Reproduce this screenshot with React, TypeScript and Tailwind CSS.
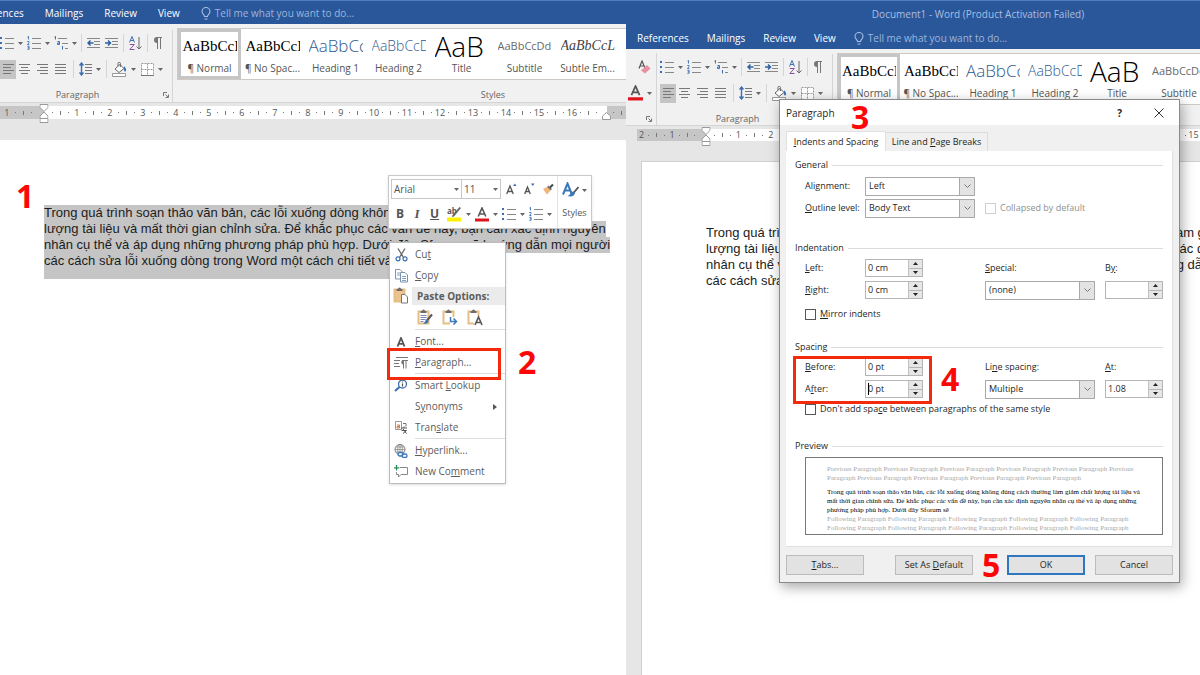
import { useId, type ReactNode } from 'react';

const RULER_COUNT = 18;

const STYLES = [
  { name: '¶ Normal', sample: 'AaBbCcI', look: "font-['Liberation_Serif',serif] text-[15px] text-black" },
  { name: '¶ No Spac...', sample: 'AaBbCcI', look: "font-['Liberation_Serif',serif] text-[15px] text-black" },
  { name: 'Heading 1', sample: 'AaBbCc', look: 'font-light text-[17px] text-[#2f5a8f]' },
  { name: 'Heading 2', sample: 'AaBbCcD', look: 'font-light text-[14px] text-[#2f5a8f]' },
  { name: 'Title', sample: 'AaB', look: 'font-light text-[28px] text-black' },
  { name: 'Subtitle', sample: 'AaBbCcDd', look: 'text-[11px] text-[#6a6a6a]' },
  { name: 'Subtle Em...', sample: 'AaBbCcL', look: "font-['Liberation_Serif',serif] italic text-[14px] text-[#444]" },
];

const TEXT_LINES = [
  'Trong quá trình soạn thảo văn bản, các lỗi xuống dòng không đúng cách thường làm giảm chất',
  'lượng tài liệu và mất thời gian chỉnh sửa. Để khắc phục các vấn đề này, bạn cần xác định nguyên',
  'nhân cụ thể và áp dụng những phương pháp phù hợp. Dưới đây Sforum sẽ hướng dẫn mọi người',
  'các cách sửa lỗi xuống dòng trong Word một cách chi tiết và',
];

/* ---------- Icons ---------- */

function Caret() {
  return (
    <svg className="w-[5px] h-[3px] shrink-0" viewBox="0 0 5 3">
      <path d="M0 0h5L2.500 3z" fill="#666" />
    </svg>
  );
}

function Bullets() {
  return (
    <svg className="w-[14px] h-[14px] shrink-0" viewBox="0 0 14 14">
      <path d="M0 1h2v2H0zM0 6h2v2H0zM0 11h2v2H0z" fill="#3c6eb4" />
      <path d="M5 2.500h9M5 7.500h9M5 12.500h9" stroke="#888" />
    </svg>
  );
}

function Numbering() {
  return (
    <svg className="w-[14px] h-[14px] shrink-0" viewBox="0 0 14 14">
      <path d="M.5 1l1-.7v3.200M.3 5.500h1.700v1.200L.5 8.500h1.800M.3 10.300h1.800v3H.3M.8 11.800h1.300" stroke="#3c6eb4" strokeWidth=".9" fill="none" />
      <path d="M5 2.500h9M5 7.500h9M5 12.500h9" stroke="#888" />
    </svg>
  );
}

function Multilevel() {
  return (
    <svg className="w-[14px] h-[14px] shrink-0" viewBox="0 0 14 14">
      <path d="M.5 1l1-.7v3.200M3.500 5.500h2v3h-2v-1.500h2M8.500 10v3.500" stroke="#3c6eb4" fill="none" />
      <path d="M4 2.500h9M8 7.500h6M11 12.500h3" stroke="#888" />
    </svg>
  );
}

function IndentIcon({ out }: { out?: boolean }) {
  return (
    <svg className="w-[13px] h-[13px] shrink-0" viewBox="0 0 13 13">
      <path d="M0 1.500h13M7 4.500h6M7 7.500h6M0 10.500h13" stroke="#888" />
      {out ? (
        <path d="M6.500 6H1M3.500 3.500L1 6L3.500 8.500" stroke="#2f5f9f" strokeWidth="1.500" fill="none" />
      ) : (
        <path d="M0 6h5.500M3 3.500l2.500 2.500L3 8.500" stroke="#2f5f9f" strokeWidth="1.500" fill="none" />
      )}
    </svg>
  );
}

function SortIcon() {
  return (
    <svg className="w-[13px] h-[15px] shrink-0" viewBox="0 0 13 15">
      <path d="M.5 6.500L3 .5l2.500 6M1.300 4.500h3.400" stroke="#3c6eb4" fill="none" />
      <path d="M.8 8.500h4.500L.8 13.500h4.700" stroke="#8a4fa0" fill="none" />
      <path d="M10 1v12M7.500 10.500L10 13l2.500-2.500" stroke="#666" fill="none" />
    </svg>
  );
}

function Pilcrow() {
  return (
    <svg className="w-[9px] h-[12px] shrink-0" viewBox="0 0 9 12">
      <path d="M3 .5H9M4.500 .5V12M7.500 .5V12" stroke="#777" />
      <path d="M4 0a3 3 0 0 0 0 6z" fill="#777" />
    </svg>
  );
}

function AlignIcon({ kind }: { kind: 'left' | 'center' | 'right' | 'justify' }) {
  const paths = {
    left: 'M0 1.500h11M0 4.500h8M0 7.500h11M0 10.500h8',
    center: 'M0 1.500h11M2 4.500h7M0 7.500h11M2 10.500h7',
    right: 'M0 1.500h11M3 4.500h8M0 7.500h11M3 10.500h8',
    justify: 'M0 1.500h11M0 4.500h11M0 7.500h11M0 10.500h11',
  };
  return (
    <svg className="w-[11px] h-[12px] shrink-0" viewBox="0 0 11 12">
      <path d={paths[kind]} stroke="#787878" />
    </svg>
  );
}

function LineSpacing() {
  return (
    <svg className="w-[13px] h-[14px] shrink-0" viewBox="0 0 13 14">
      <path d="M2.500 1v12M.5 3.500l2-2.500l2 2.500M.5 10.500l2 2.500l2-2.500" stroke="#3c6eb4" strokeWidth="1.400" fill="none" />
      <path d="M6 2.500h7M6 5.500h7M6 8.500h7M6 11.500h7" stroke="#777" />
    </svg>
  );
}

function Bucket() {
  return (
    <svg className="w-[15px] h-[15px] shrink-0" viewBox="0 0 15 15">
      <path d="M3 7l5-4.500l4 4L7 10.500zM6 4V1.500a1.200 1.200 0 0 1 2.400 0V5" stroke="#666" fill="#fff" />
      <path d="M12.500 4.500c1.700 2 2.200 3.500 1 5c-1.200 .3-1.800-.7-1.500-5z" fill="#3c6eb4" />
      <path d="M.5 11.500h13v3H.5z" fill="#fff" stroke="#999" />
    </svg>
  );
}

function Borders() {
  return (
    <svg className="w-[13px] h-[13px] shrink-0" viewBox="0 0 13 13">
      <path d="M.5 .5h12v12H.5zM6.500 .5v12M.5 6.500h12" stroke="#999" fill="#fff" strokeDasharray="2 1" />
      <path d="M0 12.500h13" stroke="#777" />
    </svg>
  );
}

function ClearFormat() {
  return (
    <svg className="w-[13px] h-[14px] shrink-0" viewBox="0 0 13 14">
      <path d="M1 8.500L4 1l3 7M2 6h4" stroke="#555" strokeWidth="1.200" fill="none" />
      <path d="M3 10.500L9 5l3.500 3.500L7 13.500z" fill="#e7909f" />
    </svg>
  );
}

function FontColor({ big }: { big?: boolean }) {
  return (
    <svg className={big ? 'w-[15px] h-[16px] shrink-0' : 'w-[14px] h-[15px] shrink-0'} viewBox="0 0 14 15">
      <path d="M3.200 9.500L7 1l3.800 8.500M4.600 7h4.800" stroke="#555" strokeWidth="1.600" fill="none" />
      <path d="M0 11.500h14v3H0z" fill="#e0121d" />
    </svg>
  );
}

function Launcher() {
  return (
    <svg className="w-[6px] h-[6px] shrink-0" viewBox="0 0 6 6">
      <path d="M.5 4V.5H4M2.500 2.500L5 5M5.500 2.500v3h-3" stroke="#777" fill="none" />
    </svg>
  );
}

function Bulb() {
  return (
    <svg className="w-[10px] h-[13px] shrink-0" viewBox="0 0 10 13">
      <path d="M3.500 9.500C3.500 7.500 1 7 1 4.500a4 4 0 0 1 8 0C9 7 6.500 7.500 6.500 9.500zM3.500 12h3" stroke="#a9bfe0" strokeWidth="1.100" fill="none" />
    </svg>
  );
}

function Highlighter() {
  return (
    <svg className="w-[15px] h-[16px] shrink-0" viewBox="0 0 15 16">
      <text x="0" y="8" fontSize="8" fontWeight="bold" fill="#555" fontFamily="Open Sans">ab</text>
      <path d="M14 2L7 10.500l-2 .5l.5-2L12.500 1z" fill="#666" />
      <path d="M0 11.500h14v4H0z" fill="#fff200" />
    </svg>
  );
}

function Brush() {
  return (
    <svg className="w-[12px] h-[12px] shrink-0" viewBox="0 0 12 12">
      <path d="M1 6l4-2l3.500 3.500L5 11.500z" fill="#f2b573" />
      <path d="M5 4l1.500-1.500L10 6L8.500 7.500z" fill="#777" />
      <path d="M8 4.500L11 1.500" stroke="#444" strokeWidth="2" />
    </svg>
  );
}

function StylesIcon() {
  return (
    <svg className="w-[17px] h-[16px] shrink-0" viewBox="0 0 17 16">
      <path d="M1 12.500L5.500 1.500L10 12.500M2.800 8.500h5.500" stroke="#3c78b8" strokeWidth="2" fill="none" />
      <path d="M16.500 5L11 11.500" stroke="#555" strokeWidth="1.800" />
      <path d="M11.500 9.500c-3 0-2.500 3-6 4.500c3 1 7 .5 7.500-3z" fill="#3c78b8" />
    </svg>
  );
}

function CutIcon() {
  return (
    <svg className="w-[13px] h-[14px]" viewBox="0 0 13 14">
      <path d="M3 .5L8.500 9.500M10 .5L4.500 9.500" stroke="#666" strokeWidth="1.300" />
      <circle cx="3" cy="10.800" r="2" stroke="#3c6eb4" strokeWidth="1.200" fill="none" />
      <circle cx="10" cy="10.800" r="2" stroke="#3c6eb4" strokeWidth="1.200" fill="none" />
    </svg>
  );
}

function CopyIcon() {
  return (
    <svg className="w-[13px] h-[14px]" viewBox="0 0 13 14">
      <path d="M.5 .5H5L7.500 3v7h-7z" fill="#fff" stroke="#7d93ad" />
      <path d="M5.500 3.500H10L12.500 6v7h-7z" fill="#fff" stroke="#7d93ad" />
      <path d="M2 4h3M2 6h3M7 7.500h4M7 9.500h4M7 11.500h4" stroke="#7fa3cf" />
    </svg>
  );
}

function PasteIcon({ kind }: { kind?: 'keep' | 'merge' | 'text' }) {
  return (
    <svg className="w-[16px] h-[17px]" viewBox="0 0 16 17">
      <path d="M1.500 2.500h10v12h-10z" fill={kind ? '#fff' : '#ecc48c'} stroke="#e6bd84" strokeWidth="2" />
      <path d="M3.500 4V2h1.500a1.500 1.500 0 0 1 3 0h1.500v2z" fill="#6c6c6c" />
      {kind === 'keep' && (
        <>
          <path d="M3.500 6.500h6M3.500 8.500h6M3.500 10.500h5M3.500 12.500h3" stroke="#7d86b5" />
          <path d="M15 5.500L9.500 12" stroke="#555" strokeWidth="2" />
          <path d="M10 10.500c-2 0-1.500 3-4 4c3 .8 5.500 0 5.500-2.500z" fill="#3c78b8" />
        </>
      )}
      {kind === 'merge' && (
        <>
          <path d="M8 8h7v8H8z" fill="#fff" />
          <path d="M8.500 8v4.500h5.500M11.500 9.500l3 3l-3 3" stroke="#3c78b8" strokeWidth="1.500" fill="none" />
        </>
      )}
      {kind === 'text' && (
        <>
          <path d="M7 7h9v9H7z" fill="#fff" />
          <path d="M8 16l3.500-8l3.500 8M9.300 13.500h4.400" stroke="#555" strokeWidth="1.600" fill="none" />
        </>
      )}
      {!kind && <path d="M8.500 7.500h3.500l2.500 2.500v6h-6z" fill="#fff" stroke="#777" />}
    </svg>
  );
}

function FontLetter() {
  return (
    <svg className="w-[10px] h-[10px]" viewBox="0 0 10 10">
      <path d="M1.500 9.500L5 1l3.500 8.500M2.500 6.800h5" stroke="#555" strokeWidth="1.800" fill="none" />
    </svg>
  );
}

function ParagraphIcon() {
  return (
    <svg className="w-[14px] h-[12px]" viewBox="0 0 14 12">
      <path d="M2 .5h12M0 3.500h6M0 6.500h5M0 9.500h6M8 3.500h6M9.500 3.500v8M12 3.500v8" stroke="#777" />
      <path d="M9.500 3a2.200 2.200 0 0 0 0 4.500z" fill="#777" />
    </svg>
  );
}

function LookupIcon() {
  return (
    <svg className="w-[14px] h-[13px]" viewBox="0 0 14 13">
      <circle cx="8.500" cy="5" r="4" stroke="#3c6eb4" strokeWidth="1.300" fill="#fff" />
      <path d="M5.500 8L1 12" stroke="#3c6eb4" strokeWidth="2" />
      <path d="M8.500 4.500v3M8.500 2.500v1" stroke="#555" strokeWidth="1.200" />
    </svg>
  );
}

function TranslateIcon() {
  return (
    <svg className="w-[13px] h-[13px]" viewBox="0 0 13 13">
      <path d="M.5 .5h6v8h-6z" fill="#fff" stroke="#999" />
      <path d="M2 4h2.500v3H2V5.500h2.500" stroke="#d07a3f" fill="none" />
      <path d="M8 2.500h3v3" stroke="#777" fill="none" />
      <path d="M6 7h6M9 5.500V7M6.500 9.500h5L8 12.500M8 8l3.500 4.500" stroke="#555" fill="none" />
    </svg>
  );
}

function HyperlinkIcon() {
  return (
    <svg className="w-[14px] h-[14px]" viewBox="0 0 14 14">
      <circle cx="6" cy="5.500" r="5" stroke="#777" fill="#fff" />
      <path d="M1 5.500h10M6 .5v10M2 3h8M2 8h8" stroke="#888" strokeWidth=".8" />
      <ellipse cx="6" cy="5.500" rx="2.300" ry="5" stroke="#888" strokeWidth=".8" fill="none" />
      <rect x="4" y="8.500" width="5" height="3.500" rx="1.700" stroke="#3c78b8" strokeWidth="1.300" fill="#fff" />
      <rect x="8" y="10" width="5" height="3.500" rx="1.700" stroke="#3c78b8" strokeWidth="1.300" fill="none" />
    </svg>
  );
}

function CommentIcon() {
  return (
    <svg className="w-[14px] h-[13px]" viewBox="0 0 14 13">
      <path d="M6 2.500h7.500v7H7l-2.500 2.500V9.500h-2V7" stroke="#888" fill="none" />
      <path d="M2.500 0v5.500M0 2.800h5.300" stroke="#2f8f5b" strokeWidth="1.300" />
    </svg>
  );
}

/* ---------- Shared pieces ---------- */

// "&" marks the underlined accelerator letter
function Accel({ text }: { text: string }) {
  const at = text.indexOf('&');
  if (at < 0) return <>{text}</>;
  return (
    <>
      {text.slice(0, at)}
      <u className="underline-offset-1">{text[at + 1]}</u>
      {text.slice(at + 2)}
    </>
  );
}

function Separator() {
  return <span className="w-px h-[18px] bg-[#d5d5d5] shrink-0" />;
}

function IconButton({ label, menu, children }: { label: string; menu?: boolean; children: ReactNode }) {
  return (
    <button type="button" aria-label={label} className="flex items-center gap-[4px] shrink-0">
      {children}
      {menu && <Caret />}
    </button>
  );
}

function ParagraphGroup() {
  return (
    <div className="w-[173px] shrink-0 border-r border-[#d5d5d5]">
      <div className="flex items-center h-[26px]">
        <div className="flex items-center gap-[4px]">
          <IconButton label="Bullets" menu><Bullets /></IconButton>
          <IconButton label="Numbering" menu><Numbering /></IconButton>
          <IconButton label="Multilevel list" menu><Multilevel /></IconButton>
        </div>
        <div className="flex items-center gap-[5px] pl-[4px]">
          <Separator />
          <IconButton label="Decrease indent"><IndentIcon out /></IconButton>
          <IconButton label="Increase indent"><IndentIcon /></IconButton>
          <Separator />
          <IconButton label="Sort"><SortIcon /></IconButton>
          <Separator />
          <IconButton label="Show marks"><Pilcrow /></IconButton>
        </div>
      </div>
      <div className="flex items-center h-[26px]">
        <button type="button" aria-label="Align left" className="flex items-center justify-center w-[16px] h-[19px] bg-[#c5c5c5]">
          <AlignIcon kind="left" />
        </button>
        <div className="flex items-center gap-[7px] pl-[3px]">
          <IconButton label="Center"><AlignIcon kind="center" /></IconButton>
          <IconButton label="Align right"><AlignIcon kind="right" /></IconButton>
          <IconButton label="Justify"><AlignIcon kind="justify" /></IconButton>
          <Separator />
        </div>
        <div className="flex items-center gap-[5px] pl-[5px]">
          <IconButton label="Line spacing" menu><LineSpacing /></IconButton>
          <Separator />
          <IconButton label="Shading" menu><Bucket /></IconButton>
          <IconButton label="Borders" menu><Borders /></IconButton>
        </div>
      </div>
      <div className="flex items-center h-[14px] mt-[6px]">
        <span className="flex-1 pr-[8px] text-center">Paragraph</span>
        <button type="button" aria-label="Paragraph settings" className="pr-[3px]"><Launcher /></button>
      </div>
    </div>
  );
}

function StyleGallery({ label, itemWidth }: { label?: string; itemWidth: string }) {
  return (
    <div className="flex-1 min-w-0 pl-[4px]">
      <div className="flex h-[52px] bg-white border border-r-0 border-[#cfc9c6] overflow-hidden">
        {STYLES.map((style, i) => (
          <button
            type="button"
            key={style.name}
            className={`flex flex-col items-center shrink-0 overflow-hidden border-3 ${itemWidth} ${
              i === 0 ? 'border-[#c6c6c6]' : 'border-transparent'
            }`}
          >
            <span className={`flex items-center w-[54px] h-[28px] overflow-hidden whitespace-nowrap ${style.look}`}>
              {style.sample}
            </span>
            <span className="text-[10px] leading-[16px] text-[#555] whitespace-nowrap">{style.name}</span>
          </button>
        ))}
      </div>
      {label && <div className="h-[14px] mt-[8px] pl-[186px] text-center w-full max-w-[446px]">{label}</div>}
    </div>
  );
}

function RibbonTabs({ gap }: { gap: string }) {
  return (
    <nav className={`flex items-center text-[10px] text-white whitespace-nowrap ${gap}`}>
      {['References', 'Mailings', 'Review', 'View'].map((tab) => (
        <a href="#ribbon" key={tab}>{tab}</a>
      ))}
      <span className="flex items-center gap-[4px] text-[#9db6dc]">
        <Bulb />
        <span>Tell me what you want to do...</span>
      </span>
    </nav>
  );
}

function RulerCell({ n, width = 'w-[33px] shrink-0' }: { n?: number; width?: string }) {
  return (
    <span className={`grid grid-cols-4 items-center justify-items-center ${width}`}>
      <i className="w-px h-px bg-[#777]" />
      <i className="w-px h-[4px] bg-[#777]" />
      <i className="w-px h-px bg-[#777]" />
      <span className="w-0 flex justify-center">{n}</span>
    </span>
  );
}

function IndentMarker() {
  return (
    <svg className="absolute left-0 -top-[2px] w-[9px] h-[19px] -translate-x-1/2" viewBox="0 0 9 19">
      <path d="M.5 .5h8v3L4.500 7.500L.5 3.500zM4.500 8L8.500 12v2.500h-8V12zM.5 14.500h8v4h-8z" fill="#fff" stroke="#999" />
    </svg>
  );
}

function Document({ selected }: { selected?: boolean }) {
  return (
    <p className="font-['Liberation_Sans',Arial,sans-serif] text-[13px] leading-[16px] text-[#1c1c1c] whitespace-nowrap">
      {TEXT_LINES.map((line) => (
        <span key={line} className={selected ? 'block w-fit bg-[#c5c5c5] last:pb-[10px]' : 'block'}>
          {line}
        </span>
      ))}
    </p>
  );
}

function Step({ n, place }: { n: number; place: string }) {
  return (
    <span className={`absolute font-bold text-[32px] leading-[32px] text-[#fb0707] ${place}`}>{n}</span>
  );
}

/* ---------- Left window: mini toolbar and context menu ---------- */

function MiniToolbar() {
  return (
    <div className="absolute left-[388px] top-[175px] flex w-[204px] h-[54px] bg-white border border-[#c8c8c8] shadow-sm text-[#555]">
      <div className="flex flex-col gap-[4px] pl-[2px] pt-[3px] flex-1">
        <div className="flex items-center h-[20px]">
          <label className="flex items-center w-[71px] h-[20px] border border-[#c8c8c8] px-[2px]">
            <input aria-label="Font" defaultValue="Arial" className="flex-1 min-w-0 text-[10px]" />
            <Caret />
          </label>
          <label className="flex items-center w-[39px] h-[20px] border border-l-0 border-[#c8c8c8] px-[2px]">
            <input aria-label="Font size" defaultValue="11" className="flex-1 min-w-0 text-[10px]" />
            <Caret />
          </label>
          <div className="flex items-center gap-[7px] pl-[5px]">
            <IconButton label="Grow font">
              <svg className="w-[11px] h-[12px]" viewBox="0 0 11 12">
                <path d="M.7 11L4 3l3.300 8M2 8.500h4" stroke="#555" strokeWidth="1.300" fill="none" />
                <path d="M7 3l1.800-2.500L10.500 3z" fill="#3c6eb4" />
              </svg>
            </IconButton>
            <IconButton label="Shrink font">
              <svg className="w-[11px] h-[12px]" viewBox="0 0 11 12">
                <path d="M.7 11L3.500 4l2.800 7M2 8.500h3.500" stroke="#555" strokeWidth="1.300" fill="none" />
                <path d="M7 .5h3.500L8.800 3z" fill="#3c6eb4" />
              </svg>
            </IconButton>
            <IconButton label="Format painter"><Brush /></IconButton>
          </div>
        </div>
        <div className="flex items-center gap-[8px] h-[22px] pl-[5px] text-[12px]">
          <button type="button" className="font-bold">B</button>
          <button type="button" className="w-[10px] font-['Liberation_Serif',serif] font-bold italic text-[13px]">I</button>
          <button type="button" className="font-bold underline">U</button>
          <div className="flex items-center gap-[4px]">
            <IconButton label="Highlight" menu><Highlighter /></IconButton>
            <IconButton label="Font color" menu><FontColor /></IconButton>
            <IconButton label="Bullets" menu><Bullets /></IconButton>
            <IconButton label="Numbering" menu><Numbering /></IconButton>
          </div>
        </div>
      </div>
      <button type="button" className="flex flex-col items-center gap-[8px] w-[34px] pt-[6px] border-l border-[#e3e3e3] text-[9px] leading-[14px]">
        <span className="flex items-center gap-[3px]">
          <StylesIcon />
          <Caret />
        </span>
        Styles
      </button>
    </div>
  );
}

function MenuItem({ icon, text, submenu }: { icon?: ReactNode; text: string; submenu?: boolean }) {
  return (
    <button type="button" role="menuitem" className="flex items-center w-full h-[21px] text-left whitespace-nowrap">
      <span className="flex justify-center w-[22px] mr-[3px]">{icon}</span>
      <span className="flex-1"><Accel text={text} /></span>
      {submenu && (
        <svg className="w-[4px] h-[6px] mr-[8px]" viewBox="0 0 4 6">
          <path d="M0 0l4 3l-4 3z" fill="#555" />
        </svg>
      )}
    </button>
  );
}

function MenuRule() {
  return <div className="h-px mb-px ml-[25px] bg-[#dcdcdc]" />;
}

function ContextMenu() {
  return (
    <div role="menu" className="absolute left-[389px] top-[242px] w-[117px] py-px bg-white border border-[#bdbdbd] shadow text-[10px] text-[#5c5c5c]">
      <MenuItem icon={<CutIcon />} text="Cu&t" />
      <MenuItem icon={<CopyIcon />} text="&Copy" />
      <div className="flex items-center h-[19px]">
        <span className="flex justify-center w-[22px]"><PasteIcon /></span>
        <span className="flex-1 h-[18px] pl-[5px] leading-[18px] bg-[#ebebeb] font-bold">Paste Options:</span>
      </div>
      <div className="flex items-center gap-[9px] h-[24px] pl-[27px]">
        <button type="button" aria-label="Keep source formatting"><PasteIcon kind="keep" /></button>
        <button type="button" aria-label="Merge formatting"><PasteIcon kind="merge" /></button>
        <button type="button" aria-label="Keep text only"><PasteIcon kind="text" /></button>
      </div>
      <MenuRule />
      <MenuItem icon={<FontLetter />} text="&Font..." />
      <MenuItem icon={<ParagraphIcon />} text="&Paragraph..." />
      <MenuRule />
      <MenuItem icon={<LookupIcon />} text="Smart &Lookup" />
      <MenuItem text="S&ynonyms" submenu />
      <MenuItem icon={<TranslateIcon />} text="Tran&slate" />
      <MenuRule />
      <MenuItem icon={<HyperlinkIcon />} text="&Hyperlink..." />
      <MenuItem icon={<CommentIcon />} text="New Co&mment" />
    </div>
  );
}

function LeftWindow() {
  return (
    <section className="relative flex flex-col overflow-hidden bg-[#e6e6e6]">
      <div className="flex items-center h-[24px] pt-px bg-[#2a579a] border-t border-[#4f7dbd]">
        <div className="-ml-[28px]">
          <RibbonTabs gap="gap-[21px]" />
        </div>
      </div>
      <div className="flex h-[79px] pt-[4px] bg-[#f1f1f1] border-b border-[#d5d5d5] text-[9px] leading-[14px] text-[#666]">
        <div className="pt-[2px]"><ParagraphGroup /></div>
        <StyleGallery label="Styles" itemWidth="w-[63px]" />
      </div>
      <div className="flex h-[13px] mt-[3px] text-[9px] leading-[13px] text-[#555]">
        <div className="flex justify-end w-[44px] shrink-0 bg-[#c6c6c6] overflow-hidden">
          <RulerCell n={1} />
          <RulerCell />
        </div>
        <div className="relative flex flex-1 min-w-0 pl-[4px] bg-[linear-gradient(to_right,#fff_calc(100%-19px),#c6c6c6_0)]">
          <IndentMarker />
          <div className="flex w-full overflow-hidden">
            {Array.from({ length: RULER_COUNT }, (_, i) => (
              <RulerCell key={i} n={i < 16 ? i + 1 : undefined} />
            ))}
          </div>
          <svg className="absolute right-[15px] top-[6px] w-[9px] h-[8px]" viewBox="0 0 9 8">
            <path d="M4.500 .5L8.500 4v3.500h-8V4z" fill="#fff" stroke="#999" />
          </svg>
        </div>
      </div>
      <div className="flex-1 mt-[21px] pt-[65px] pl-[44px] bg-white">
        <Document selected />
      </div>

      <MiniToolbar />
      <ContextMenu />
      <div className="absolute left-[387px] top-[348px] w-[114px] h-[32px] border-3 border-[#f52a0c]" />
      <Step n={1} place="left-[16px] top-[180px]" />
      <Step n={2} place="left-[518px] top-[346px]" />
    </section>
  );
}

/* ---------- Right window: Paragraph dialog ---------- */

function SelectField({ value, id }: { value: string; id: string }) {
  return (
    <span className="grid w-[110px] h-[19px] border border-[#a9a9a9] bg-white">
      <select id={id} className="col-start-1 row-start-1 appearance-none pl-[3px]">
        <option>{value}</option>
      </select>
      <span className="col-start-1 row-start-1 justify-self-end flex items-center justify-center w-[15px] bg-[#e3e3e3] border-l border-[#a9a9a9] pointer-events-none">
        <svg className="w-[7px] h-[4px]" viewBox="0 0 7 4">
          <path d="M.5 .5l3 3l3-3" stroke="#777" fill="none" />
        </svg>
      </span>
    </span>
  );
}

function SpinField({ value, id, caret }: { value: string; id: string; caret?: boolean }) {
  return (
    <span className="relative flex w-[58px] h-[18px] border border-[#b5b5b5] bg-white">
      <input id={id} defaultValue={value} className="flex-1 min-w-0 pl-[2px]" />
      {caret && <i className="absolute left-[2px] top-[2px] w-px h-[12px] bg-black" />}
      <span className="flex flex-col w-[14px] bg-[#e6e6e6] border-l border-[#c0c0c0]">
        <button type="button" aria-label="Increase" className="flex-1 flex items-center justify-center border-b border-[#b5b5b5]">
          <svg className="w-[5px] h-[3px]" viewBox="0 0 5 3"><path d="M0 3L2.500 0L5 3z" fill="#222" /></svg>
        </button>
        <button type="button" aria-label="Decrease" className="flex-1 flex items-center justify-center">
          <svg className="w-[5px] h-[3px]" viewBox="0 0 5 3"><path d="M0 0h5L2.500 3z" fill="#222" /></svg>
        </button>
      </span>
    </span>
  );
}

function Field({ label, kind, value, caret }: { label: string; kind: 'select' | 'spin'; value: string; caret?: boolean }) {
  const id = useId();
  return (
    <div className="flex items-center h-[22px]">
      <label htmlFor={id} className="w-[60px]"><Accel text={label} /></label>
      {kind === 'select' ? <SelectField id={id} value={value} /> : <SpinField id={id} value={value} caret={caret} />}
    </div>
  );
}

function StackedField({ label, kind, value }: { label: string; kind: 'select' | 'spin'; value: string }) {
  const id = useId();
  return (
    <div>
      <label htmlFor={id} className="flex items-center h-[22px]"><span><Accel text={label} /></span></label>
      <div className="flex items-center h-[22px]">
        {kind === 'select' ? <SelectField id={id} value={value} /> : <SpinField id={id} value={value} />}
      </div>
    </div>
  );
}

function CheckField({ label, disabled }: { label: string; disabled?: boolean }) {
  return (
    <label className={`flex items-center gap-[4px] whitespace-nowrap ${disabled ? 'text-[#8f8f8f]' : ''}`}>
      <input
        type="checkbox"
        disabled={disabled}
        className={`appearance-none w-[11px] h-[11px] border bg-white ${disabled ? 'border-[#cfcfcf]' : 'border-[#555]'}`}
      />
      <span><Accel text={label} /></span>
    </label>
  );
}

function SectionTitle({ children }: { children: ReactNode }) {
  return (
    <h3 className="flex items-center gap-[4px] h-[16px]">
      {children}
      <span className="flex-1 h-px bg-[#dcdcdc]" />
    </h3>
  );
}

function Preview() {
  const previous = 'Previous Paragraph ';
  const following = 'Following Paragraph ';
  return (
    <div className="h-[78px] ml-[10px] mt-[3px] pt-[7px] pl-[21px] border border-[#777] overflow-hidden font-['Liberation_Serif',serif] text-[7px] leading-[9px] whitespace-nowrap text-[#a8a8a8]">
      <p>{previous.repeat(5)}Previous</p>
      <p>Paragraph {previous.repeat(4)}</p>
      <div className="mt-[5px] text-black">
        <p>Trong quá trình soạn thảo văn bản, các lỗi xuống dòng không đúng cách thường làm giảm chất lượng tài liệu và</p>
        <p>mất thời gian chỉnh sửa. Để khắc phục các vấn đề này, bạn cần xác định nguyên nhân cụ thể và áp dụng những</p>
        <p>phương pháp phù hợp. Dưới đây Sforum sẽ</p>
      </div>
      <p>{following.repeat(5)}</p>
      <p>{following.repeat(5)}</p>
      <p>{following.repeat(5)}</p>
    </div>
  );
}

function DialogButton({ label, primary }: { label: string; primary?: boolean }) {
  return (
    <button
      type="button"
      className={`w-[78px] h-[20px] bg-[#e2e2e2] ${primary ? 'border-2 border-[#2f78bf]' : 'border border-[#bcbcbc]'}`}
    >
      <Accel text={label} />
    </button>
  );
}

function ParagraphDialog() {
  return (
    <div
      role="dialog"
      aria-label="Paragraph"
      className="absolute left-[153px] top-[99px] w-[401px] border border-[#8a8a8a] bg-[#f0f0f0] shadow-[2px_4px_12px_rgba(0,0,0,0.35)] text-[9px] leading-[12px] text-[#1f1f1f]"
    >
      <header className="flex items-center h-[25px] pl-[6px] pr-[15px] bg-white text-[10px]">
        <h2 className="flex-1">Paragraph</h2>
        <button type="button" className="mr-[32px] font-bold">?</button>
        <button type="button" aria-label="Close">
          <svg className="w-[10px] h-[10px]" viewBox="0 0 10 10">
            <path d="M.5 .5l9 9M9.500 .5l-9 9" stroke="#333" />
          </svg>
        </button>
      </header>

      <div role="tablist" className="flex items-end h-[26px] pl-[6px]">
        <button role="tab" type="button" className="w-[100px] h-[20px] bg-white border border-b-0 border-[#e0e0e0]"><Accel text="&Indents and Spacing" /></button>
        <button role="tab" type="button" className="w-[102px] h-[19px] border border-l-0 border-b-0 border-[#dcdcdc]"><Accel text="Line and &Page Breaks" /></button>
      </div>

      <div className="relative mx-[6px] pt-[6px] pl-[9px] pr-[9px] pb-[11px] bg-white border-b border-r border-[#e0e0e0]">
        <SectionTitle>General</SectionTitle>
        <div className="pl-[10px] pt-[2px]">
          <Field label="Ali&gnment:" kind="select" value="Left" />
          <div className="flex items-center gap-[10px]">
            <Field label="&Outline level:" kind="select" value="Body Text" />
            <CheckField label="Collapsed by default" disabled />
          </div>
        </div>

        <div className="h-[21px]" />
        <SectionTitle>Indentation</SectionTitle>
        <div className="flex pl-[10px] pt-px">
          <div className="flex-1">
            <Field label="&Left:" kind="spin" value="0 cm" />
            <Field label="&Right:" kind="spin" value="0 cm" />
          </div>
          <div className="flex gap-[10px]">
            <StackedField label="&Special:" kind="select" value="(none)" />
            <StackedField label="B&y:" kind="spin" value="" />
          </div>
        </div>
        <div className="flex h-[18px] pl-[10px] mt-[4px]">
          <CheckField label="&Mirror indents" />
        </div>

        <div className="h-[16px]" />
        <SectionTitle>Spacing</SectionTitle>
        <div className="flex pl-[10px] pt-px">
          <div className="relative flex-1">
            <Field label="&Before:" kind="spin" value="0 pt" />
            <Field label="A&fter:" kind="spin" value="0 pt" caret />
            <div className="absolute -left-[12px] top-0 w-[139px] h-[48px] border-3 border-[#f52a0c]" />
          </div>
          <div className="flex gap-[10px]">
            <StackedField label="Li&ne spacing:" kind="select" value="Multiple" />
            <StackedField label="&At:" kind="spin" value="1.08" />
          </div>
        </div>
        <div className="flex h-[18px] pl-[10px]">
          <CheckField label="Don't add spa&ce between paragraphs of the same style" />
        </div>

        <div className="h-[20px]" />
        <SectionTitle>Preview</SectionTitle>
        <Preview />
      </div>

      <footer className="flex items-center h-[35px] px-[6px]">
        <DialogButton label="&Tabs..." />
        <div className="flex-1 flex justify-end gap-[10px]">
          <span className="mr-[24px]"><DialogButton label="Set As &Default" /></span>
          <DialogButton label="OK" primary />
          <DialogButton label="Cancel" />
        </div>
      </footer>

      <Step n={3} place="left-[71px] top-px" />
      <Step n={4} place="left-[161px] top-[263px]" />
      <Step n={5} place="left-[202px] top-[449px]" />
    </div>
  );
}

function RightWindow() {
  return (
    <section className="relative flex flex-col overflow-hidden bg-[#e6e6e6]">
      <div className="h-[49px] bg-[#2a579a] border-t border-[#4f7dbd]">
        <div className="h-[27px] pl-[130px] leading-[27px] text-center text-[10px] text-[#a9bfe0]">
          Document1 - Word (Product Activation Failed)
        </div>
        <div className="pt-[3px] pl-[11px]">
          <RibbonTabs gap="gap-[18px]" />
        </div>
      </div>
      <div className="flex h-[77px] pt-[4px] bg-[#f1f1f1] border-b border-[#d5d5d5] text-[9px] leading-[14px] text-[#666]">
        <div className="w-[31px] pt-px mr-[3px] border-r border-[#d5d5d5] shrink-0">
          <div className="flex items-center justify-center h-[26px] pl-[6px]">
            <IconButton label="Clear formatting"><ClearFormat /></IconButton>
          </div>
          <div className="flex items-center h-[26px] pl-[2px]">
            <IconButton label="Font color" menu><FontColor big /></IconButton>
          </div>
          <div className="flex items-center justify-end h-[14px] mt-[6px] pr-[4px]"><Launcher /></div>
        </div>
        <div className="pt-px"><ParagraphGroup /></div>
        <StyleGallery itemWidth="w-[62px]" />
      </div>
      <div className="flex h-[12px] mt-[3px] text-[9px] leading-[12px] text-[#555]">
        <div className="flex justify-end w-[69px] shrink-0 ml-[11px] bg-[#c6c6c6]">
          <span className="w-[5px]">2</span>
          <RulerCell n={1} width="w-[32px] shrink-0" />
          <RulerCell width="w-[30px] shrink-0" />
        </div>
        <div className="relative flex flex-1 min-w-0 pl-[4px] bg-white">
          <IndentMarker />
          <div className="flex w-[585px] shrink-0">
            {Array.from({ length: RULER_COUNT }, (_, i) => (
              <RulerCell key={i} n={i + 1} width="flex-1" />
            ))}
          </div>
        </div>
      </div>
      <div className="flex-1 mt-[20px] ml-[15px] pt-[63px] pl-[64px] bg-white border-l border-t border-[#d0d0d0] overflow-hidden">
        <Document />
      </div>

      <ParagraphDialog />
    </section>
  );
}

export default function App() {
  return (
    <main className="grid grid-cols-[626fr_574fr] min-h-screen bg-white font-['Open_Sans','Noto_Sans',sans-serif]">
      <LeftWindow />
      <RightWindow />
    </main>
  );
}
